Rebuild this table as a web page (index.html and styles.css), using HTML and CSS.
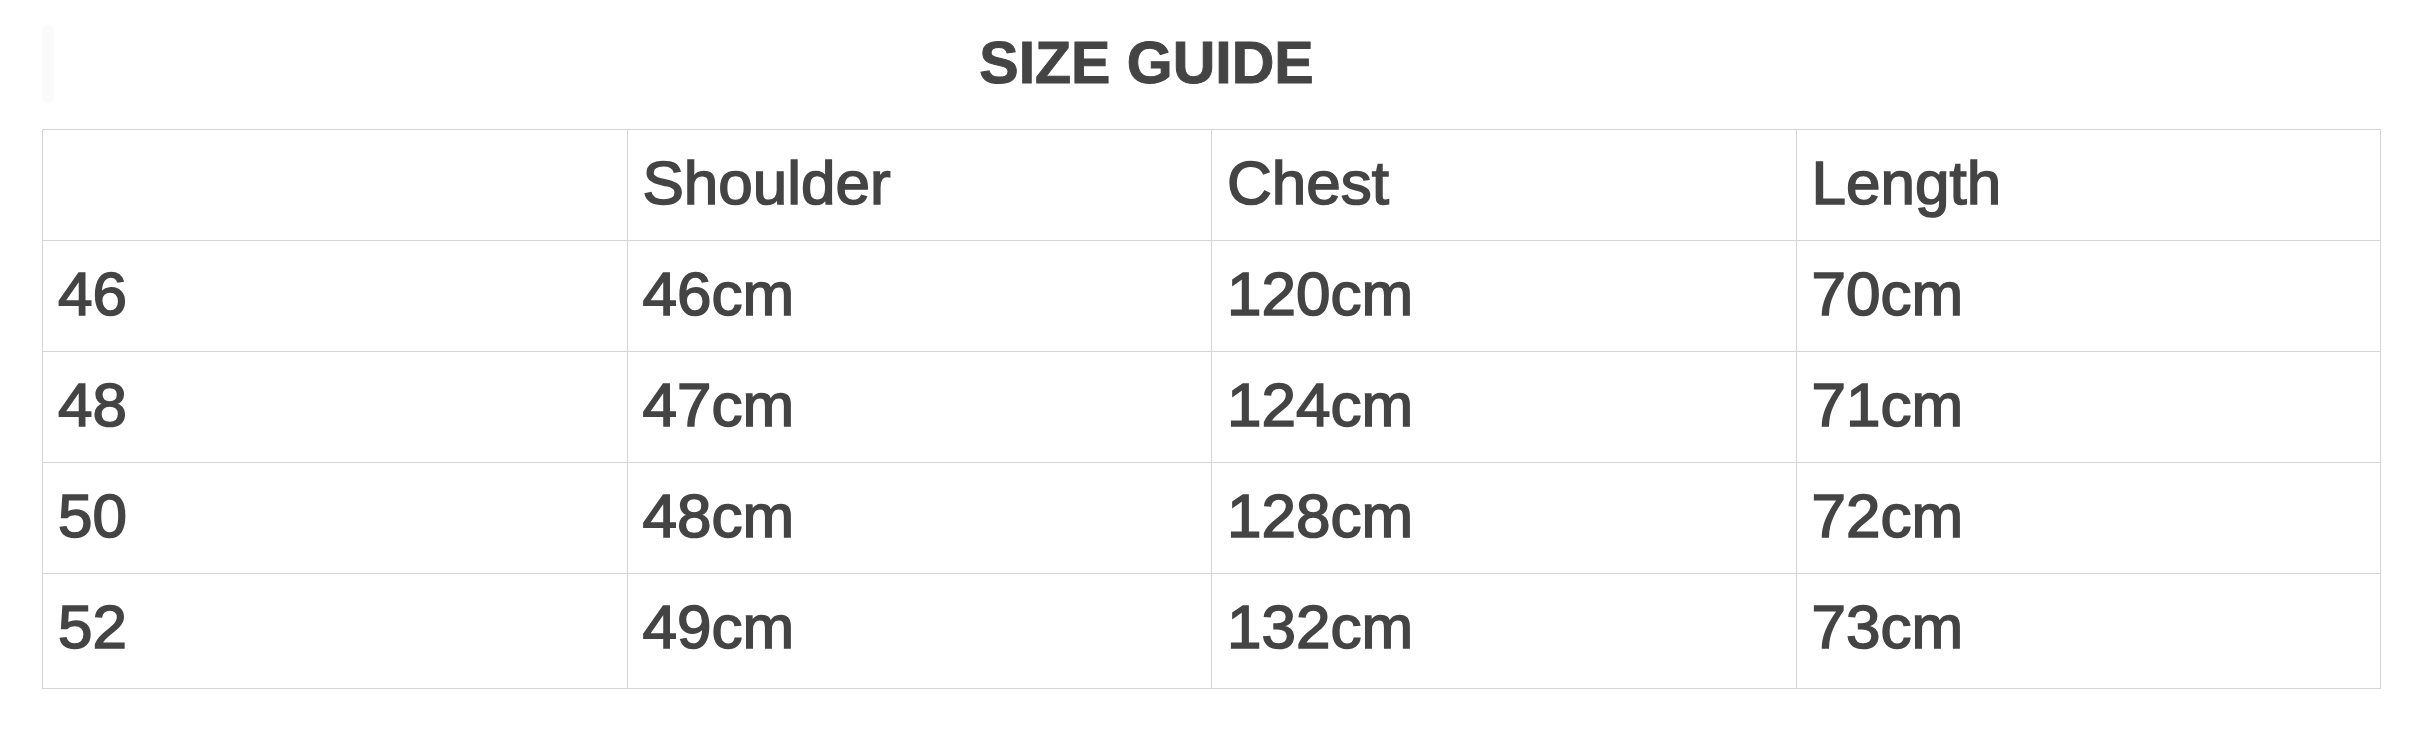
FILE: index.html
```html
<!DOCTYPE html>
<html lang="en">
<head>
<meta charset="utf-8">
<title>Size Guide</title>
<link rel="stylesheet" href="styles.css">
</head>
<body>
<div class="page">
  <header class="head">
    <div class="ghost-bar"></div>
    <h1 class="title">SIZE GUIDE</h1>
  </header>
  <table class="size-table">
    <thead>
      <tr>
        <th></th>
        <th>Shoulder</th>
        <th>Chest</th>
        <th>Length</th>
      </tr>
    </thead>
    <tbody>
      <tr><td>46</td><td>46cm</td><td>120cm</td><td>70cm</td></tr>
      <tr><td>48</td><td>47cm</td><td>124cm</td><td>71cm</td></tr>
      <tr><td>50</td><td>48cm</td><td>128cm</td><td>72cm</td></tr>
      <tr class="last"><td>52</td><td>49cm</td><td>132cm</td><td>73cm</td></tr>
    </tbody>
  </table>
</div>
</body>
</html>
```

FILE: styles.css
```css
html, body {
  margin: 0;
  padding: 0;
  background: #ffffff;
}

.page {
  width: 2424px;
  padding: 25px 43px 0 42px;
  box-sizing: border-box;
  font-family: "Liberation Sans", Arial, sans-serif;
  color: #444444;
}

.head {
  display: flex;
  align-items: flex-start;
  height: 78px;
}

.ghost-bar {
  width: 12px;
  height: 78px;
  border-radius: 6px;
  background: #fafafa;
  flex: none;
}

.title {
  flex: 1;
  margin: 4px 0 0 0;
  padding-right: 142px;
  text-align: center;
  font-size: 59px;
  line-height: 68px;
  font-weight: 700;
  color: #444444;
  letter-spacing: 0;
  -webkit-text-stroke: 1px #444444;
}

.size-table {
  margin-top: 26px;
  width: 2339px;
  border-collapse: collapse;
  table-layout: fixed;
}

.size-table th,
.size-table td {
  border: 1px solid #d5d5d5;
  padding: 17px 15px 22px 15px;
  font-size: 62px;
  line-height: 71px;
  font-weight: 400;
  text-align: left;
  vertical-align: top;
  color: #444444;
  -webkit-text-stroke: 1.6px #444444;
  width: 25%;
}

.size-table tr.last td {
  padding-bottom: 26px;
}
```
